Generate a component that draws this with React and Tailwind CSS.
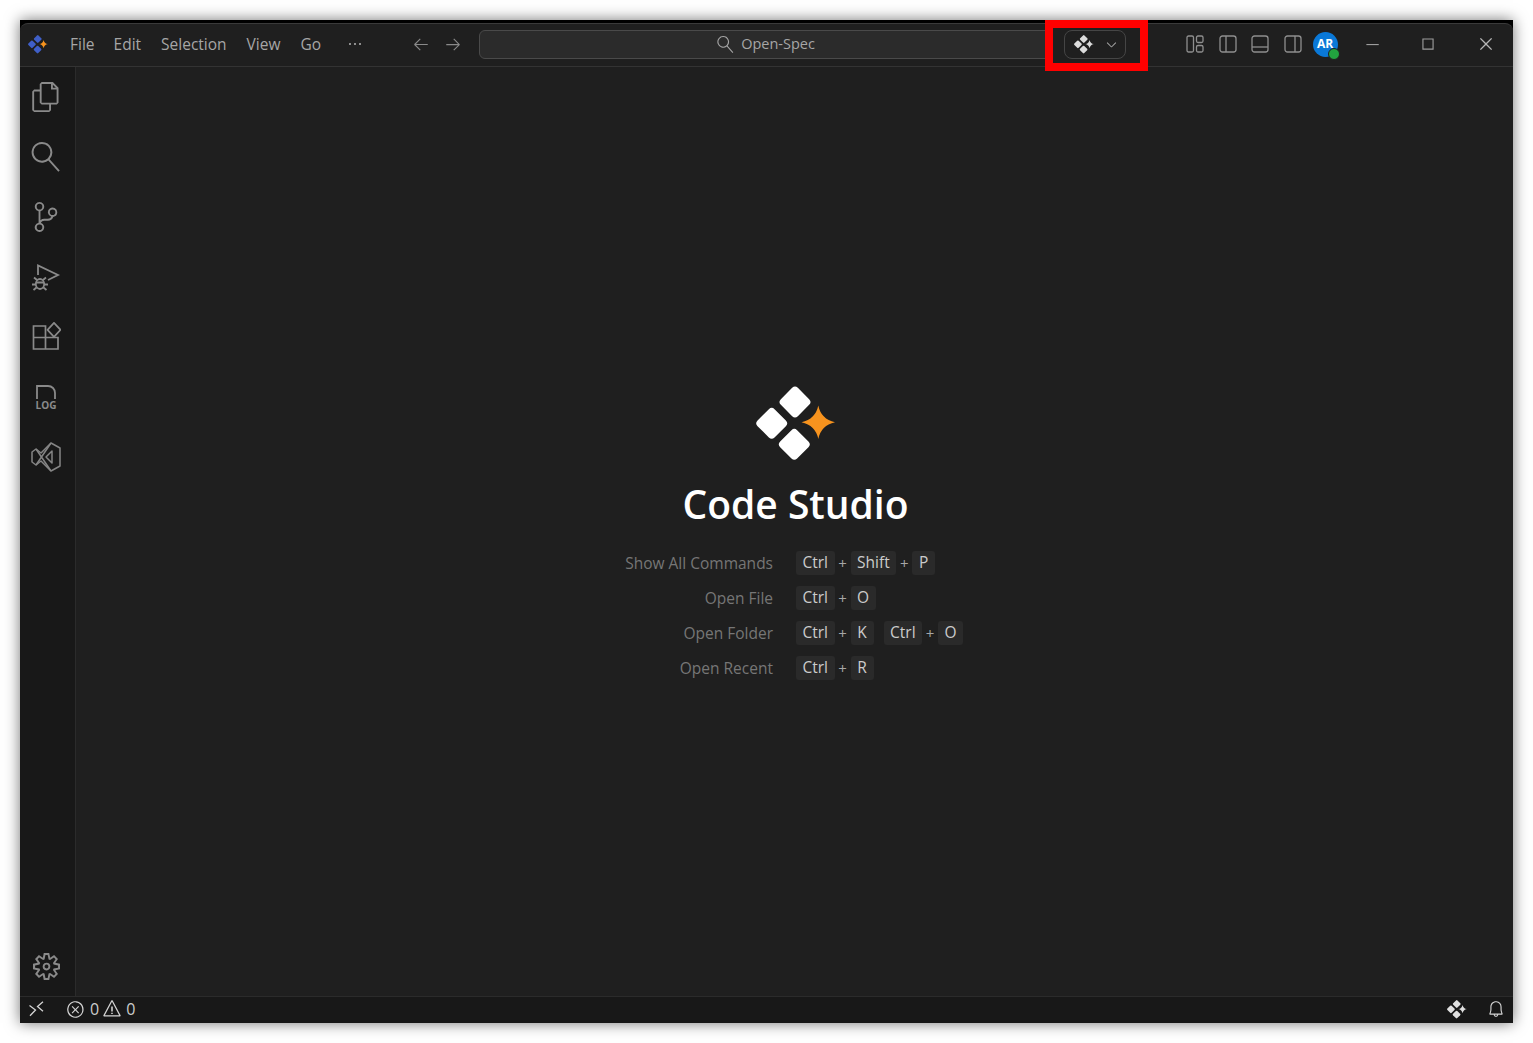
import {
  VscArrowLeft,
  VscArrowRight,
  VscBell,
  VscChevronDown,
  VscChromeClose,
  VscChromeMaximize,
  VscChromeMinimize,
  VscEllipsis,
  VscError,
  VscFiles,
  VscSearch,
  VscSettingsGear,
  VscSourceControl,
  VscWarning,
} from 'react-icons/vsc';

const menus = [
  { label: 'File', className: 'ml-[22px] pt-[2px]' },
  { label: 'Edit', className: 'ml-[19px] pt-[2px]' },
  { label: 'Selection', className: 'ml-[20px] pt-[2px]' },
  { label: 'View', className: 'ml-[20px] pt-[2px]' },
  { label: 'Go', className: 'ml-[20px] pt-[2px]' },
];

const shortcuts = [
  { label: 'Show All Commands', keys: [['Ctrl', 'Shift', 'P']] },
  { label: 'Open File', keys: [['Ctrl', 'O']] },
  { label: 'Open Folder', keys: [['Ctrl', 'K'], ['Ctrl', 'O']] },
  { label: 'Open Recent', keys: [['Ctrl', 'R']] },
];

const Logo = ({ className, diamond = '#ffffff', star = '#f7931e' }) => (
  <svg viewBox="0 0 80 76" className={className}>
    <rect x="27" y="4" width="24" height="24" rx="4" fill={diamond} transform="rotate(45 39 16)" />
    <rect x="3.7" y="25.3" width="24" height="24" rx="4" fill={diamond} transform="rotate(45 15.7 37.3)" />
    <rect x="26.3" y="46.3" width="24" height="24" rx="4" fill={diamond} transform="rotate(45 38.3 58.3)" />
    <path d="M62.3 19.5 Q65 33 79 36.3 Q65 39.5 62.3 53 Q59.5 39.5 45.5 36.3 Q59.5 33 62.3 19.5 Z" fill={star} />
  </svg>
);

// the three layout toggles share the same frame, only the inner divider moves
const LayoutIcon = ({ children }) => (
  <svg viewBox="0 0 18 18" fill="none" stroke="#8f8f8f" strokeWidth="1.3" className="w-[18px] h-[18px]">
    {children}
  </svg>
);

const DebugIcon = () => (
  <svg viewBox="0 0 30 30" fill="none" stroke="#8a8a8a" strokeWidth="1.8" className="w-[30px] h-[30px]">
    <path d="M7 13 V3.5 L27 13 L17 18" />
    <ellipse cx="9" cy="22" rx="4.2" ry="5" />
    <path d="M5 20.5 H13 M6 18 L3 15.5 M12 18 L15 15.5 M5 22.5 H1 M13 22.5 H17 M5.5 25.5 L2.5 28 M12.5 25.5 L15.5 28" />
  </svg>
);

const ExtensionsIcon = () => (
  <svg viewBox="0 0 30 30" fill="none" stroke="#8a8a8a" strokeWidth="1.7" className="w-[30px] h-[30px]">
    <path d="M2.5 4 H14.5 V27 H2.5 Z M2.5 15.5 H27 V27 H14.5" />
    <path d="M23 0.8 L29.5 7.8 L23 14.8 L16.5 7.8 Z" strokeLinejoin="round" />
  </svg>
);

const LogIcon = () => (
  <div className="flex flex-col items-center pt-[3px]">
    <svg viewBox="0 0 20 14" fill="none" stroke="#8a8a8a" strokeWidth="1.8" className="w-[20px] h-[14px]">
      <path d="M1 14 V1 H12 C16 1 19 4 19 8 V14" />
    </svg>
    <span className="text-[10px] leading-[10px] font-bold text-[#8a8a8a] mt-[1px]">LOG</span>
  </div>
);

const VsIcon = () => (
  <svg viewBox="0 0 30 30" fill="none" stroke="#858585" strokeWidth="1.5" strokeLinejoin="round" className="w-[30px] h-[30px]">
    <path d="M20 1 L29 6 V24 L20 29 L10 19 L5 23 L1 20 V10 L5 7 L10 11 Z" />
    <path d="M21 9 L15 15 L21 21 Z" />
    <path d="M5 7 L20 29 M5 23 L20 1" />
  </svg>
);

const RemoteIcon = () => (
  <svg viewBox="0 0 16 16" fill="none" stroke="#d4d4d4" strokeWidth="1.3" className="ml-[8px] w-[16px] h-[16px]">
    <path d="M1.5 4.5 L7.5 9 L2 14.7" />
    <path d="M15 0.7 L9.5 5.5 L15 10.3" />
  </svg>
);

const activityIcons = [
  { id: 'files', icon: <VscFiles className="w-[30px] h-[30px] text-[#8a8a8a]" /> },
  { id: 'search', icon: <VscSearch className="w-[30px] h-[30px] text-[#8a8a8a] -scale-x-100" /> },
  { id: 'scm', icon: <VscSourceControl className="w-[30px] h-[30px] text-[#8a8a8a]" /> },
  { id: 'debug', icon: <DebugIcon /> },
  { id: 'extensions', icon: <ExtensionsIcon /> },
  { id: 'log', icon: <LogIcon /> },
  { id: 'vs', icon: <VsIcon /> },
];

const TitleBar = () => (
  <div className="flex items-center h-[44px] pb-[2px] rounded-t-[8px] border-t border-b border-t-[#3a3a3a] border-b-[#333333] bg-[#1f1f1f] text-[15.5px] text-[#a6a6a6]">
    <Logo className="ml-[8px] w-[20px] h-[19px]" diamond="#3f5fc8" />
    {menus.map((menu) => (
      <span key={menu.label} className={menu.className}>{menu.label}</span>
    ))}
    <VscEllipsis className="ml-[26px] w-[16px] h-[16px] text-[#b5b5b5]" />
    <VscArrowLeft className="ml-[49px] w-[18px] h-[18px] text-[#8a8a8a]" />
    <VscArrowRight className="ml-[14px] w-[18px] h-[18px] text-[#8a8a8a]" />
    <div className="ml-[17px] w-[574px] h-[29px] flex items-center justify-center gap-[7px] rounded-[6px] border border-[#4a4a4a] bg-[#2b2b2b]">
      <VscSearch className="w-[17px] h-[17px] -scale-x-100 text-[#a6a6a6]" />
      <span className="text-[14.5px]">Open-Spec</span>
    </div>
    <div className="ml-[11px] w-[62px] h-[29px] flex items-center gap-[10px] pl-[9px] rounded-[8px] border border-[#454545]">
      <Logo className="w-[20px] h-[19px]" diamond="#dcdcdc" star="#dcdcdc" />
      <VscChevronDown className="w-[15px] h-[15px] text-[#b0b0b0]" />
    </div>
    <div className="ml-[60px] flex items-center gap-[14.5px]">
      <LayoutIcon>
        <rect x="1" y="1" width="6.5" height="16" rx="1.5" />
        <rect x="10.5" y="1" width="6.5" height="6.5" rx="1.5" />
        <rect x="10.5" y="10.5" width="6.5" height="6.5" rx="1.5" />
      </LayoutIcon>
      <LayoutIcon>
        <rect x="1" y="1" width="16" height="16" rx="2.5" />
        <path d="M7 1 V17" />
      </LayoutIcon>
      <LayoutIcon>
        <rect x="1" y="1" width="16" height="16" rx="2.5" />
        <path d="M1 12 H17" />
      </LayoutIcon>
      <LayoutIcon>
        <rect x="1" y="1" width="16" height="16" rx="2.5" />
        <path d="M11 1 V17" />
      </LayoutIcon>
    </div>
    <div className="relative ml-[11px] w-[25px] h-[25px] rounded-full bg-[#0a78d7] flex items-center justify-center text-[12px] font-bold text-white">
      AR
      <span className="absolute right-[-2px] bottom-[-3px] w-[12px] h-[12px] rounded-full bg-[#22a33f] border border-[#1f1f1f]" />
    </div>
    <VscChromeMinimize className="ml-[25px] w-[18px] h-[18px] text-[#9d9d9d]" />
    <VscChromeMaximize className="ml-[38px] w-[18px] h-[18px] text-[#9d9d9d]" />
    <VscChromeClose className="ml-[40px] w-[18px] h-[18px] text-[#b5b5b5]" />
  </div>
);

const ActivityBar = () => (
  <div className="w-[56px] flex flex-col items-center justify-between border-r border-[#2b2b2b] bg-[#181818] pt-[15px] pb-[16px] pr-[3px]">
    <div className="flex flex-col items-center">
      {activityIcons.map((item) => (
        <div key={item.id} className="h-[60px] flex items-start justify-center">
          {item.icon}
        </div>
      ))}
    </div>
    <VscSettingsGear className="w-[27px] h-[27px] text-[#8a8a8a]" />
  </div>
);

const Key = ({ children }) => (
  <span className="h-[24px] min-w-[23px] px-[6.5px] flex items-center justify-center rounded-[3px] bg-[#2a2a2a] text-[15.5px] leading-none text-[#cccccc]">
    {children}
  </span>
);

const Shortcut = ({ keys }) => (
  <div className="flex items-center">
    {keys.map((key, i) => (
      <span key={i} className="flex items-center">
        {i > 0 && <span className="w-[16px] text-center leading-none text-[#a6a6a6]">+</span>}
        <Key>{key}</Key>
      </span>
    ))}
  </div>
);

const Welcome = () => (
  <div className="flex-1 flex flex-col items-center bg-[#1f1f1f] pt-[319px]">
    <Logo className="ml-[2px] w-[80px] h-[76px]" />
    <h1 className="ml-[2px] mt-[17px] text-[39px] leading-[50px] font-semibold text-white">Code Studio</h1>
    <div className="mt-[22px] grid grid-cols-[148px_168px] gap-x-[23px] gap-y-[11px] text-[15px]">
      {shortcuts.map((row) => (
        <div key={row.label} className="contents">
          <div className="h-[24px] flex items-center justify-end pt-[1px] whitespace-nowrap text-[15.5px] leading-none text-[#767676]">{row.label}</div>
          <div className="h-[24px] flex items-center gap-[10px]">
            {row.keys.map((keys, i) => (
              <Shortcut key={i} keys={keys} />
            ))}
          </div>
        </div>
      ))}
    </div>
  </div>
);

const StatusBar = () => (
  <div className="flex items-center h-[27px] pb-[2px] border-t border-[#2b2b2b] bg-[#181818] text-[16px] text-[#cccccc]">
    <RemoteIcon />
    <VscError className="ml-[22px] w-[19px] h-[19px] text-[#d4d4d4]" />
    <span className="ml-[5px]">0</span>
    <VscWarning className="ml-[3px] w-[20px] h-[20px] text-[#d4d4d4]" />
    <span className="ml-[4px]">0</span>
    <Logo className="ml-auto w-[20px] h-[19px]" diamond="#e0e0e0" star="#e0e0e0" />
    <VscBell className="ml-[20px] mr-[8px] w-[18px] h-[18px] text-[#d4d4d4]" />
  </div>
);

export default function App() {
  return (
    <div className="min-h-[1043px] bg-white p-[20px] font-['Open_Sans','Noto_Sans',sans-serif]">
      <div className="relative w-[1493px] h-[1003px] flex flex-col bg-black pt-[3px] shadow-[0_0_14px_rgba(0,0,0,0.55)]">
        <TitleBar />
        <div className="flex-1 flex min-h-0">
          <ActivityBar />
          <Welcome />
        </div>
        <StatusBar />
        {/* red highlight drawn over the screenshot */}
        <div className="absolute left-[1025px] top-0 w-[103px] h-[51px] border-[8px] border-[#ff0000]" />
      </div>
    </div>
  );
}
